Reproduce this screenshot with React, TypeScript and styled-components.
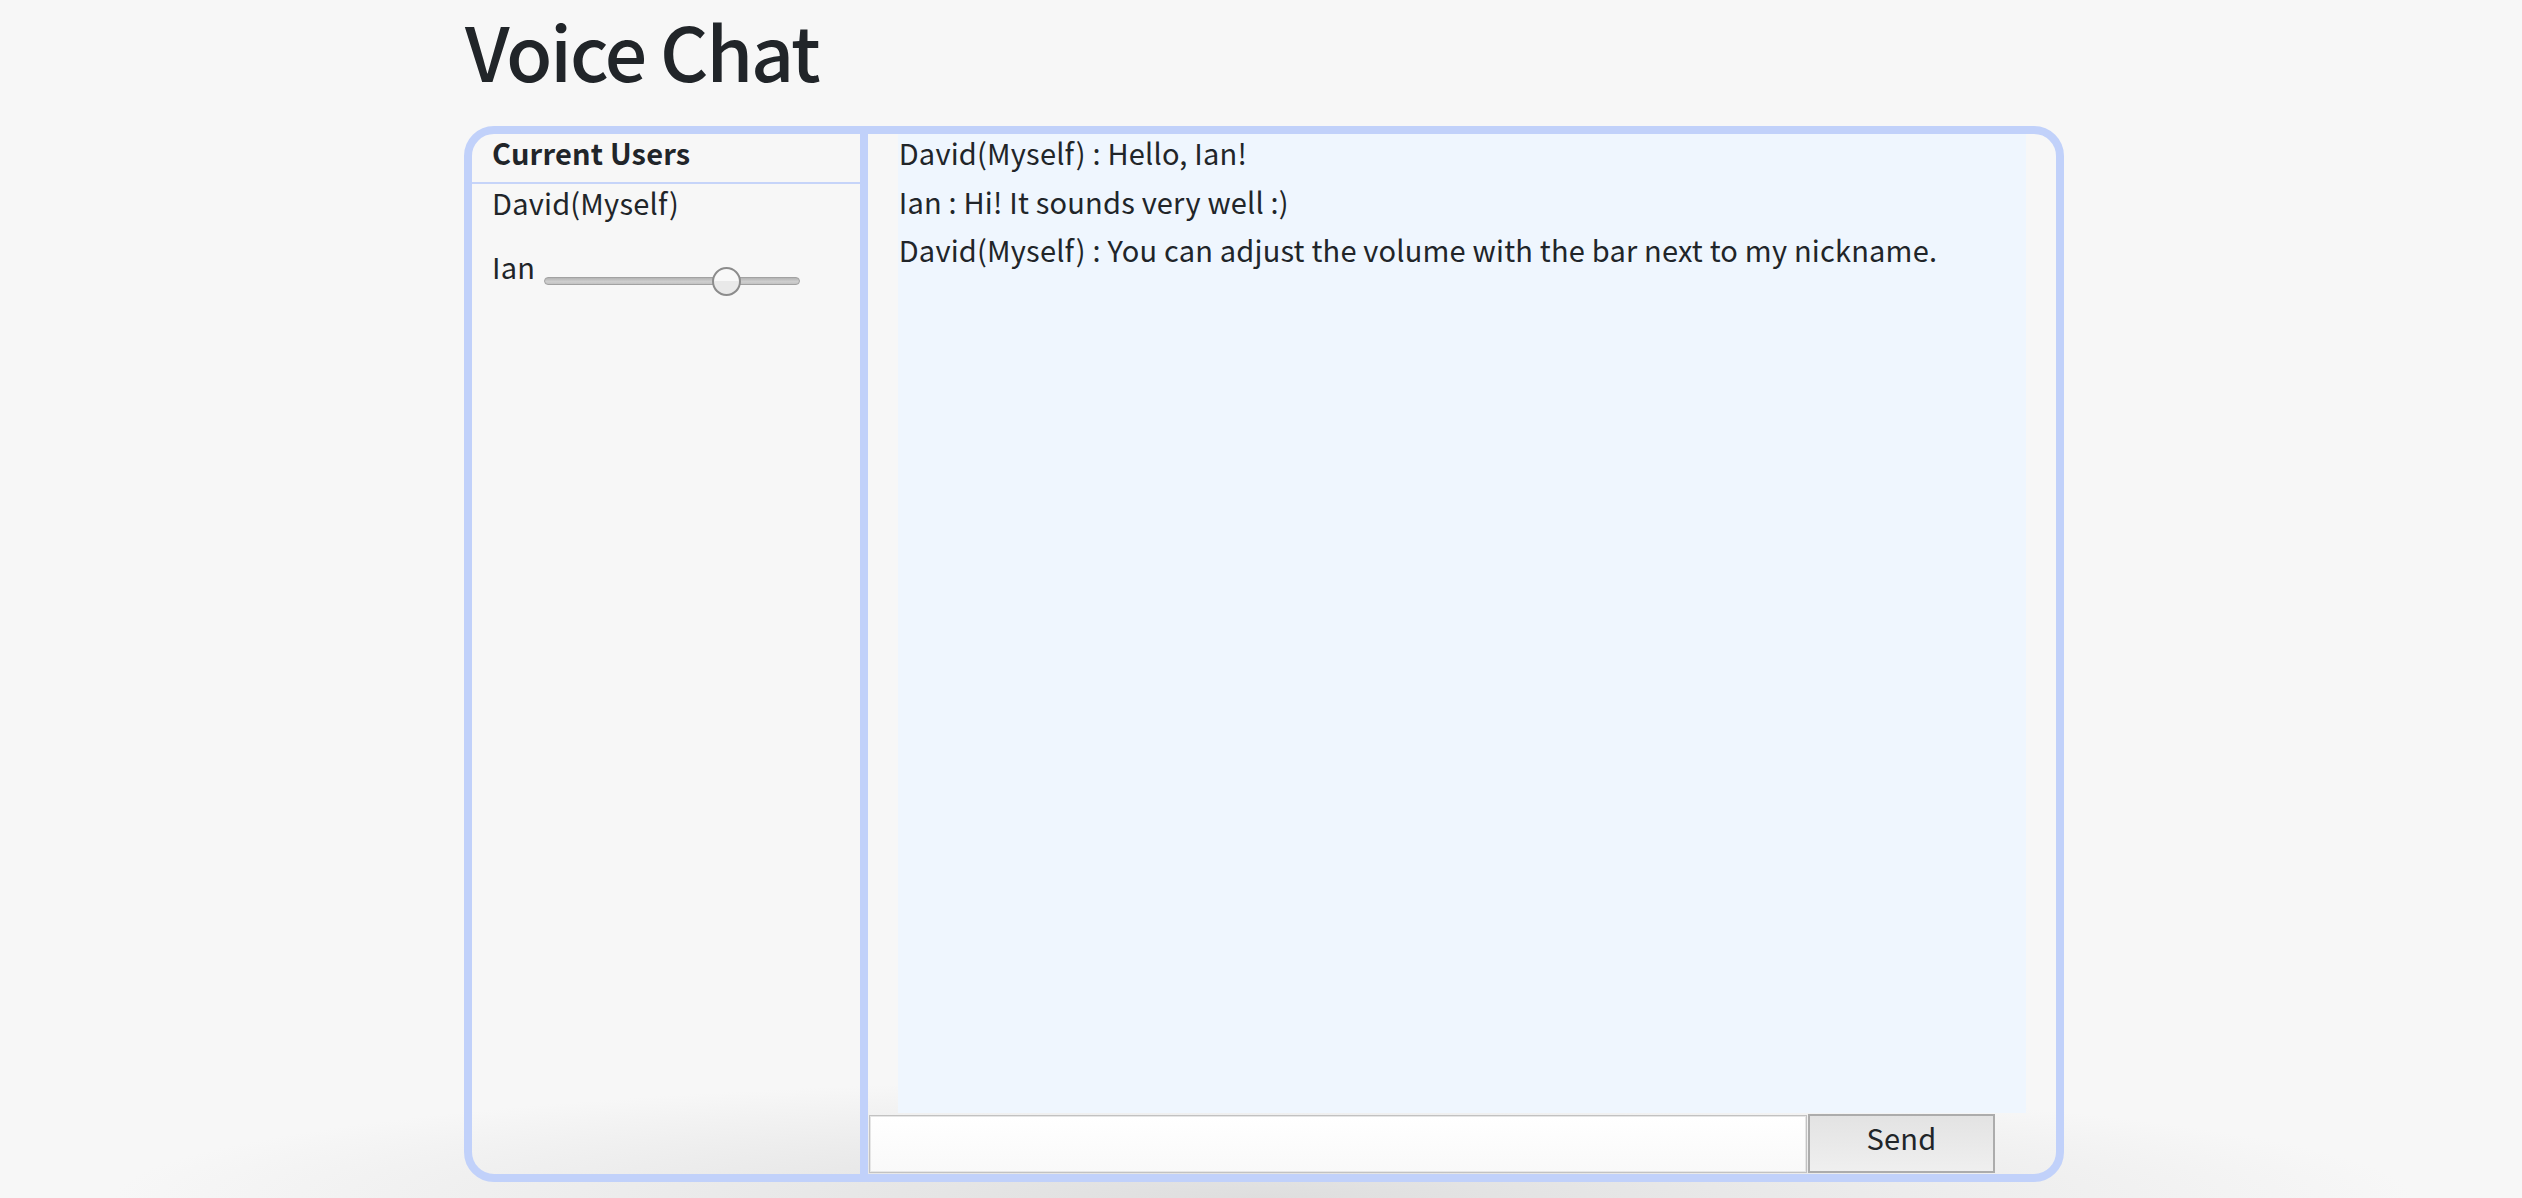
import React, { useState } from 'react';
import styled, { createGlobalStyle } from 'styled-components';

const GlobalStyle = createGlobalStyle`
  html, body {
    margin: 0;
    padding: 0;
  }
  body {
    background: #f7f7f7;
    color: #212529;
    font-family: "Noto Sans CJK KR", "Noto Sans", sans-serif;
  }
`;

const messages = [
  { from: 'David(Myself)', text: 'Hello, Ian!' },
  { from: 'Ian', text: 'Hi! It sounds very well :)' },
  { from: 'David(Myself)', text: 'You can adjust the volume with the bar next to my nickname.' },
];

const App = (): JSX.Element => {
  const [volume, setVolume] = useState(74);
  const [draft, setDraft] = useState('');

  return (
    <Page>
      <GlobalStyle />
      <Container>
        <Title>Voice Chat</Title>
        <ChatBox>
          <UserPanel>
            <PanelHeader>Current Users</PanelHeader>
            <UserList>
              <UserRow>
                <UserName>David(Myself)</UserName>
              </UserRow>
              <UserRow spaced>
                <UserName>Ian</UserName>
                <VolumeSlider
                  type="range"
                  min={0}
                  max={100}
                  value={volume}
                  onChange={(e) => setVolume(Number(e.target.value))}
                />
              </UserRow>
            </UserList>
          </UserPanel>

          <MessagePanel>
            <MessageLog>
              {messages.map((m, i) => (
                <Message key={i}>
                  {m.from} : {m.text}
                </Message>
              ))}
            </MessageLog>
            <InputRow>
              <MessageInput value={draft} onChange={(e) => setDraft(e.target.value)} />
              <SendButton type="button">Send</SendButton>
            </InputRow>
          </MessagePanel>
        </ChatBox>
      </Container>
    </Page>
  );
};

export default App;

const Page = styled.div`
  min-height: 100vh;
  overflow: hidden;
  background: radial-gradient(
    ellipse 1150px 120px at calc(50% + 3px) 100%,
    #dedede 0%,
    rgba(247, 247, 247, 0) 100%
  );
`;

const Container = styled.div`
  width: 1600px;
  margin-left: calc(50% - 797px);
  padding-top: 7px;
`;

const Title = styled.h1`
  margin: 0 0 34px 1px;
  font-size: 75px;
  line-height: 85px;
  font-weight: 500;
  letter-spacing: -2px;
`;

const ChatBox = styled.div`
  display: flex;
  box-sizing: border-box;
  height: 1056px;
  border: 8px solid #c1d1fa;
  border-radius: 30px;
  overflow: hidden;
`;

const UserPanel = styled.aside`
  width: 388px;
  flex: none;
  border-right: 8px solid #c1d1fa;
`;

const PanelHeader = styled.div`
  padding: 0 20px 12px;
  font-size: 29px;
  line-height: 36px;
  font-weight: 700;
  letter-spacing: 0.2px;
  border-bottom: 2px solid #c6d4f9;
`;

const UserList = styled.div`
  display: flex;
  flex-direction: column;
`;

const UserRow = styled.div<{ spaced?: boolean }>`
  display: flex;
  align-items: flex-start;
  padding: 0 20px;
  margin-top: ${({ spaced }) => (spaced ? '28px' : '0')};
`;

const UserName = styled.span`
  font-size: 29px;
  line-height: 36px;
  letter-spacing: 0.2px;
`;

const VolumeSlider = styled.input`
  appearance: none;
  -webkit-appearance: none;
  width: 256px;
  height: 30px;
  margin: 18px 0 0 9px;
  padding: 0;
  background: transparent;

  &::-webkit-slider-runnable-track {
    height: 8px;
    border: 1px solid #a2a2a2;
    border-radius: 5px;
    background: linear-gradient(#b4b4b4, #cfcfcf 60%, #c2c2c2);
  }

  &::-webkit-slider-thumb {
    -webkit-appearance: none;
    box-sizing: border-box;
    width: 29px;
    height: 29px;
    margin-top: -11.5px;
    border: 2px solid #8c8c8c;
    border-radius: 50%;
    background: linear-gradient(#f8f8f8 50%, #e9e9e9 50%);
  }
`;

const MessagePanel = styled.section`
  flex: 1;
  display: flex;
  flex-direction: column;
  min-width: 0;
`;

const MessageLog = styled.div`
  flex: 1;
  width: 95%;
  margin: 0 auto;
  background: #eff6fe;
  font-size: 29px;
  letter-spacing: 0.2px;
`;

const Message = styled.div`
  line-height: 36px;
  margin-bottom: 12.5px;
  padding-left: 1px;
`;

const InputRow = styled.div`
  display: flex;
  align-items: flex-end;
  height: 61px;
  padding: 0 0 1px 1px;
  box-sizing: border-box;
`;

const MessageInput = styled.input`
  box-sizing: border-box;
  width: 938px;
  height: 58px;
  margin: 0;
  border: 1px solid #c2c2c2;
  box-shadow: inset 0 0 0 1px #e6e6e6;
  background: linear-gradient(#ffffff, #f9f9f9);
  font-family: inherit;
  font-size: 26px;
  padding: 0 10px;
  outline: none;
`;

const SendButton = styled.button`
  box-sizing: border-box;
  width: 187px;
  height: 59px;
  margin: 0 0 0 1px;
  padding: 0 0 14px;
  border: 2px solid #acacac;
  background: linear-gradient(#e3e3e3, #efefef);
  color: #212529;
  font-family: inherit;
  font-size: 29px;
  letter-spacing: 0.2px;
  cursor: pointer;
`;
